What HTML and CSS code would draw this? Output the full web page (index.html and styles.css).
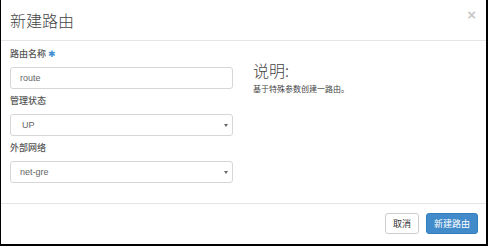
FILE: index.html
```html
<!DOCTYPE html>
<html>
<head>
  <meta charset="utf-8">
  <link rel="stylesheet" href="styles.css">
</head>
<body>
  <div class="modal">
    <div class="modal-header">
      <h3 class="modal-title">新建路由</h3>
      <button class="close" type="button">×</button>
    </div>

    <div class="modal-body">
      <div class="form-col">
        <div class="form-group">
          <label class="control-label">路由名称 <span class="required">✱</span></label>
          <input class="form-control" type="text" value="route">
        </div>
        <div class="form-group">
          <label class="control-label">管理状态</label>
          <div class="select-wrap">
            <select class="form-control select-up">
              <option>UP</option>
            </select>
          </div>
        </div>
        <div class="form-group">
          <label class="control-label">外部网络</label>
          <div class="select-wrap">
            <select class="form-control">
              <option>net-gre</option>
            </select>
          </div>
        </div>
      </div>

      <div class="help-col">
        <h3 class="help-title">说明:</h3>
        <p class="help-text">基于特殊参数创建一路由。</p>
      </div>
    </div>

    <div class="modal-footer">
      <button class="btn btn-default" type="button">取消</button>
      <button class="btn btn-primary" type="button">新建路由</button>
    </div>
  </div>
</body>
</html>
```

FILE: styles.css
```css
/* Base */
body {
  margin: 0;
  background: #fff;
  font-family: "Liberation Sans", "Noto Sans CJK SC", sans-serif;
  color: #333;
}

.modal {
  width: 485px;
  height: 244px;
  border-left: 1px solid #000;
  border-right: 2px solid #000;
  border-bottom: 2px solid #000;
  display: flex;
  flex-direction: column;
  background: #fff;
}

/* Header */
.modal-header {
  height: 40px;
  border-bottom: 1px solid #e5e5e5;
  display: flex;
  align-items: center;
  justify-content: space-between;
  padding: 0 9px 0 9px;
}

.modal-title {
  margin: 0;
  font-family: "Noto Sans CJK SC", sans-serif;
  font-size: 16px;
  font-weight: 300;
  color: #444;
  line-height: 20px;
}

.close {
  border: 0;
  background: none;
  padding: 0;
  margin: 0 1px 12px 0;
  font-family: "Liberation Sans", sans-serif;
  font-size: 15px;
  font-weight: bold;
  line-height: 1;
  color: #c8c8c8;
  cursor: pointer;
}

/* Body */
.modal-body {
  flex: 1;
  display: flex;
  gap: 20px;
  padding: 7px 9px 0 9px;
}

.form-col {
  width: 223px;
}

.form-group {
  margin-bottom: 6px;
}

.control-label {
  display: block;
  font-family: "Noto Sans CJK SC", sans-serif;
  font-size: 9px;
  font-weight: 500;
  line-height: 12px;
  color: #555;
  margin-bottom: 7px;
}

.required {
  color: #3f8fd2;
  font-size: 9px;
}

.form-control {
  display: block;
  width: 100%;
  height: 22px;
  box-sizing: border-box;
  margin: 0;
  padding: 0 9px;
  border: 1px solid #d6d6d6;
  border-radius: 3px;
  background: #fff;
  font-family: "Liberation Sans", sans-serif;
  font-size: 9px;
  color: #666;
  outline: none;
}

select.form-control {
  appearance: none;
  -webkit-appearance: none;
}

.select-up {
  padding-left: 11px;
}

.select-wrap {
  position: relative;
}

.select-wrap::after {
  content: '';
  position: absolute;
  right: 5px;
  top: 10px;
  border-left: 2px solid transparent;
  border-right: 2px solid transparent;
  border-top: 3px solid #666;
  pointer-events: none;
}

/* Help text */
.help-col {
  flex: 1;
}

.help-title {
  margin: 12px 0 0;
  font-family: "Noto Sans CJK SC", sans-serif;
  font-size: 16px;
  font-weight: 300;
  line-height: 20px;
  color: #444;
}

.help-text {
  margin: 3px 0 0;
  font-family: "Noto Sans CJK SC", sans-serif;
  font-size: 8px;
  line-height: 11px;
  color: #444;
}

/* Footer */
.modal-footer {
  height: 31px;
  border-top: 1px solid #e5e5e5;
  padding: 9px 8px 0 0;
  display: flex;
  justify-content: flex-end;
  align-items: flex-start;
  gap: 7px;
}

.btn {
  height: 21px;
  box-sizing: border-box;
  padding: 0 7px;
  border-radius: 3px;
  font-family: "Noto Sans CJK SC", sans-serif;
  font-size: 9px;
  line-height: 19px;
  cursor: pointer;
}

.btn-default {
  background: #fff;
  border: 1px solid #ccc;
  color: #333;
}

.btn-primary {
  background: #428bca;
  border: 1px solid #357ebd;
  color: #fff;
}
```
